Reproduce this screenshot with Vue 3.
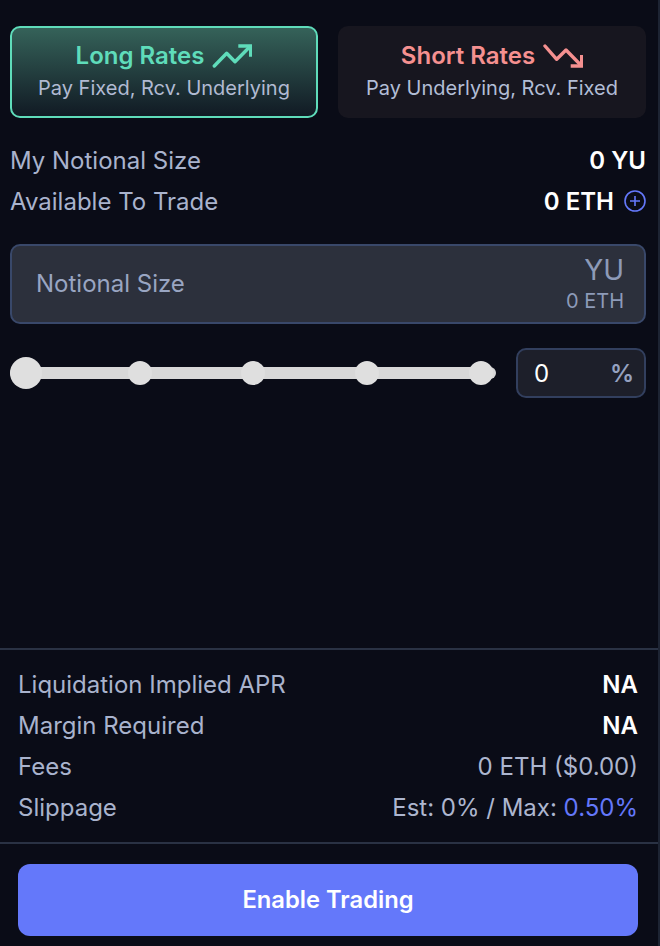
<script setup>
const stats = [
  { label: 'Liquidation Implied APR', value: 'NA', strong: true },
  { label: 'Margin Required', value: 'NA', strong: true },
  { label: 'Fees', value: '0 ETH ($0.00)' },
]
const stops = [0, 1, 2, 3]
</script>

<template>
  <div class="panel">
    <div class="main">
      <div class="tabs">
        <button class="tab long">
          <span class="tab-title">Long Rates
            <svg class="trend" width="40" height="24" viewBox="0 0 40 24" fill="none" stroke="currentColor" stroke-width="3.4" stroke-linecap="round" stroke-linejoin="round">
              <path d="M2.3 22 L14.7 9.3 L23 17.7 L38 2.5" />
              <path d="M26.3 2 H38.7 V12.7" stroke-linecap="butt" stroke-linejoin="miter" />
            </svg>
          </span>
          <span class="tab-sub">Pay Fixed, Rcv. Underlying</span>
        </button>
        <button class="tab short">
          <span class="tab-title">Short Rates
            <svg class="trend" width="40" height="24" viewBox="0 0 40 24" fill="none" stroke="currentColor" stroke-width="3.4" stroke-linecap="round" stroke-linejoin="round">
              <path d="M2 2 L13.7 15.3 L23 6 L37.7 21" />
              <path d="M27.7 22 H38.7 V11" stroke-linecap="butt" stroke-linejoin="miter" />
            </svg>
          </span>
          <span class="tab-sub">Pay Underlying, Rcv. Fixed</span>
        </button>
      </div>

      <div class="balances">
        <div class="row">
          <span class="label">My Notional Size</span>
          <span class="strong">0 YU</span>
        </div>
        <div class="row">
          <span class="label">Available To Trade</span>
          <span class="strong with-icon">0 ETH
            <svg width="22" height="22" viewBox="0 0 22 22" fill="none" stroke="#6478fa" stroke-width="1.6">
              <circle cx="11" cy="11" r="10" />
              <path d="M11 6 V16 M6 11 H16" />
            </svg>
          </span>
        </div>
      </div>

      <div class="size-input">
        <span class="size-label">Notional Size</span>
        <div class="size-right">
          <span class="unit">YU</span>
          <span class="eth">0 ETH</span>
        </div>
      </div>

      <div class="slider-row">
        <div class="slider">
          <span class="thumb"></span>
          <span v-for="s in stops" :key="s" class="stop"></span>
        </div>
        <div class="pct">
          <span class="pct-value">0</span>
          <span class="pct-sign">%</span>
        </div>
      </div>
    </div>

    <div class="stats">
      <div v-for="s in stats" :key="s.label" class="stat">
        <span class="label">{{ s.label }}</span>
        <span :class="s.strong ? 'strong' : 'muted'">{{ s.value }}</span>
      </div>
      <div class="stat">
        <span class="label">Slippage</span>
        <span class="muted">Est: 0% / Max: <span class="accent">0.50%</span></span>
      </div>
    </div>

    <div class="footer">
      <button class="cta">Enable Trading</button>
    </div>
  </div>
</template>

<style>
html, body { margin: 0; background: #0a0c17; }
</style>

<style scoped>
.panel {
  width: 660px;
  height: 946px;
  box-sizing: border-box;
  display: flex;
  flex-direction: column;
  background: #0a0c17;
  border-right: 2px solid #1d2433;
  font-family: Inter, "Liberation Sans", sans-serif;
  color: #adb6cf;
}
.main {
  flex: 1;
  padding: 26px 12px 0 10px;
}
.tabs {
  display: flex;
  gap: 20px;
}
.tab {
  flex: 1;
  height: 92px;
  box-sizing: border-box;
  border-radius: 10px;
  display: flex;
  flex-direction: column;
  align-items: center;
  justify-content: center;
  gap: 4px;
  padding: 0 0 2px;
  font-family: inherit;
  border: 2px solid transparent;
}
.long {
  background: linear-gradient(180deg, #356259 0%, #111a24 100%);
  border-color: #5fdcba;
}
.short {
  background: #17161f;
}
.tab-title {
  display: flex;
  align-items: center;
  gap: 8px;
  font-size: 24px;
  line-height: 30px;
  font-weight: 600;
}
.long .tab-title { color: #5fdcba; }
.short .tab-title { color: #f59090; }
.tab-sub {
  font-size: 20px;
  line-height: 26px;
  color: #b1bad2;
}
.short .tab-sub { color: #b2bdd6; }
.balances {
  margin-top: 26px;
  display: flex;
  flex-direction: column;
  gap: 9px;
}
.row, .stat {
  display: flex;
  justify-content: space-between;
  align-items: center;
  height: 32px;
  font-size: 24px;
}
.label { color: #a9b3cd; }
.strong { color: #fff; font-weight: 600; }
.muted { color: #adb6cf; }
.accent { color: #6478fa; }
.with-icon {
  display: flex;
  align-items: center;
  gap: 10px;
}
.size-input {
  margin-top: 27px;
  height: 80px;
  box-sizing: border-box;
  border: 2px solid #39486a;
  border-radius: 10px;
  background: #2c303c;
  display: flex;
  justify-content: space-between;
  align-items: center;
  padding: 0 20px 0 24px;
}
.size-label {
  font-size: 24px;
  color: #99a5c2;
  margin-bottom: 2px;
}
.size-right {
  display: flex;
  flex-direction: column;
  align-items: flex-end;
}
.unit {
  font-size: 28px;
  line-height: 32px;
  margin-bottom: 2px;
  color: #8d9ab8;
}
.eth {
  font-size: 20px;
  line-height: 26px;
  color: #8d9ab8;
}
.slider-row {
  margin-top: 24px;
  display: flex;
  align-items: center;
  justify-content: space-between;
}
.slider {
  position: relative;
  width: 486px;
  height: 12px;
  border-radius: 6px;
  background: #d8d8d8;
  display: flex;
  align-items: center;
  justify-content: space-between;
}
.thumb {
  flex: none;
  width: 32px;
  height: 32px;
  border-radius: 50%;
  background: #dfdfdf;
  margin-right: -4px;
}
.stop {
  flex: none;
  width: 24px;
  height: 24px;
  border-radius: 50%;
  background: #dfdfdf;
}
.stop:last-child { margin-right: 3.5px; }
.pct {
  width: 130px;
  height: 50px;
  box-sizing: border-box;
  border: 2px solid #323f5e;
  border-radius: 10px;
  background: #1d1f2a;
  display: flex;
  justify-content: space-between;
  align-items: center;
  padding: 0 10px 0 16px;
  font-size: 24px;
}
.pct-value { color: #fff; }
.pct-sign { color: #94a1c0; font-weight: 600; }
.stats {
  border-top: 2px solid #2a3244;
  padding: 18px 20px 13px 18px;
  display: flex;
  flex-direction: column;
  gap: 9px;
  height: 194px;
  box-sizing: border-box;
}
.footer {
  border-top: 2px solid #2a3244;
  padding: 20px 20px 10px 18px;
}
.cta {
  width: 100%;
  height: 72px;
  border: none;
  border-radius: 12px;
  background: #6478fa;
  color: #fff;
  font-family: inherit;
  font-size: 23.75px;
  font-weight: 600;
  padding: 0 0 2px;
}
</style>
